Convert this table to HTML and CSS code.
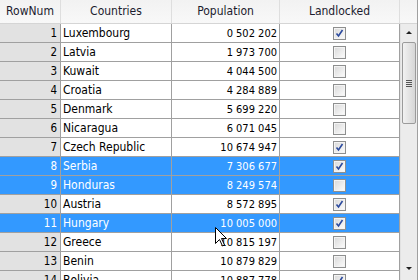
FILE: index.html
```html
<!DOCTYPE html>
<html>
<head>
<meta charset="utf-8">
<link rel="stylesheet" href="styles.css">
</head>
<body>
<div class="grid">
  <div class="head">
    <div class="hc c1">RowNum</div>
    <div class="hc c2">Countries</div>
    <div class="hc c3">Population</div>
    <div class="hc c4">Landlocked</div>
    <div class="hc c5"></div>
  </div>
  <div class="main">
    <div class="rows">
      <div class="row"><div class="num">1</div><div class="name">Luxembourg</div><div class="pop">0 502 202</div><div class="chk"><span class="box"><svg class="tick" width="11" height="11" viewBox="0 0 11 11"><path d="M2.5 5.5 L4.5 8 L8.5 2" fill="none" stroke="#2b4a9e" stroke-width="1.6"/></svg></span></div></div>
      <div class="row"><div class="num">2</div><div class="name">Latvia</div><div class="pop">1 973 700</div><div class="chk"><span class="box"></span></div></div>
      <div class="row"><div class="num">3</div><div class="name">Kuwait</div><div class="pop">4 044 500</div><div class="chk"><span class="box"></span></div></div>
      <div class="row"><div class="num">4</div><div class="name">Croatia</div><div class="pop">4 284 889</div><div class="chk"><span class="box"></span></div></div>
      <div class="row"><div class="num">5</div><div class="name">Denmark</div><div class="pop">5 699 220</div><div class="chk"><span class="box"></span></div></div>
      <div class="row"><div class="num">6</div><div class="name">Nicaragua</div><div class="pop">6 071 045</div><div class="chk"><span class="box"></span></div></div>
      <div class="row"><div class="num">7</div><div class="name">Czech Republic</div><div class="pop">10 674 947</div><div class="chk"><span class="box"><svg class="tick" width="11" height="11" viewBox="0 0 11 11"><path d="M2.5 5.5 L4.5 8 L8.5 2" fill="none" stroke="#2b4a9e" stroke-width="1.6"/></svg></span></div></div>
      <div class="row sel"><div class="num">8</div><div class="name">Serbia</div><div class="pop">7 306 677</div><div class="chk"><span class="box"><svg class="tick" width="11" height="11" viewBox="0 0 11 11"><path d="M2.5 5.5 L4.5 8 L8.5 2" fill="none" stroke="#2b4a9e" stroke-width="1.6"/></svg></span></div></div>
      <div class="row sel"><div class="num">9</div><div class="name">Honduras</div><div class="pop">8 249 574</div><div class="chk"><span class="box"></span></div></div>
      <div class="row"><div class="num">10</div><div class="name">Austria</div><div class="pop">8 572 895</div><div class="chk"><span class="box"><svg class="tick" width="11" height="11" viewBox="0 0 11 11"><path d="M2.5 5.5 L4.5 8 L8.5 2" fill="none" stroke="#2b4a9e" stroke-width="1.6"/></svg></span></div></div>
      <div class="row sel"><div class="num">11</div><div class="name">Hungary</div><div class="pop">10 005 000</div><div class="chk"><span class="box"><svg class="tick" width="11" height="11" viewBox="0 0 11 11"><path d="M2.5 5.5 L4.5 8 L8.5 2" fill="none" stroke="#2b4a9e" stroke-width="1.6"/></svg></span></div></div>
      <div class="row"><div class="num">12</div><div class="name">Greece</div><div class="pop">10 815 197</div><div class="chk"><span class="box"></span></div></div>
      <div class="row"><div class="num">13</div><div class="name">Benin</div><div class="pop">10 879 829</div><div class="chk"><span class="box"></span></div></div>
      <div class="row"><div class="num">14</div><div class="name">Bolivia</div><div class="pop">10 887 778</div><div class="chk"><span class="box"><svg class="tick" width="11" height="11" viewBox="0 0 11 11"><path d="M2.5 5.5 L4.5 8 L8.5 2" fill="none" stroke="#2b4a9e" stroke-width="1.6"/></svg></span></div></div>
    </div>
    <div class="vscroll">
      <div class="arrow up"></div>
      <div class="track">
        <div class="thumb"><span class="grip"></span></div>
      </div>
      <div class="arrow down"></div>
    </div>
  </div>
  <svg class="cursor" width="13" height="20" viewBox="0 0 13 20">
    <path d="M0.5 0.5 L0.5 16.5 L4.5 12.5 L7.5 19 L9.5 18 L6.5 11.5 L11.5 11.5 Z" fill="#fff" stroke="#000" stroke-width="1"/>
  </svg>
</div>
</body>
</html>
```
FILE: styles.css
```css
html, body {
  margin: 0;
  padding: 0;
  background: #fff;
}
body {
  font-family: "DejaVu Sans Condensed", "DejaVu Sans", Verdana, sans-serif;
  font-stretch: condensed;
  font-size: 12px;
  color: #000;
  width: 418px;
  height: 280px;
  overflow: hidden;
}
.grid {
  position: relative;
  width: 418px;
  height: 280px;
  overflow: hidden;
  box-sizing: border-box;
  border-right: 1px solid #a0a0a0;
}
.head {
  display: flex;
  height: 24px;
  box-sizing: border-box;
  border-bottom: 1px solid #d5d5d5;
  background: linear-gradient(#f2f2f2, #f8f8f8);
}
.hc {
  display: flex;
  align-items: center;
  justify-content: center;
  border-right: 1px solid #dedede;
  box-sizing: border-box;
  color: #1b1b2e;
  padding-bottom: 1px;
}
.c1 { width: 61px; }
.c2 { width: 111px; }
.c3 { width: 108px; }
.c4 { width: 120px; }
.c5 { width: 17px; border-right: none; }
.main {
  display: flex;
  height: 256px;
}
.rows {
  width: 400px;
  display: flex;
  flex-direction: column;
}
.row {
  display: flex;
  flex: none;
  height: 19px;
  box-sizing: border-box;
  border-bottom: 1px solid #a0a0a0;
}
.row > div {
  box-sizing: border-box;
  border-right: 1px solid #a0a0a0;
  display: flex;
  align-items: center;
  white-space: nowrap;
  overflow: hidden;
}
.num {
  width: 61px;
  justify-content: flex-end;
  padding-right: 3px;
  background: #e2e2e2;
  font-size: 11.5px;
}
.name {
  width: 111px;
  padding-left: 2px;
}
.pop {
  width: 108px;
  justify-content: flex-end;
  padding-right: 2px;
  font-size: 11px;
}
.chk {
  width: 120px;
  justify-content: center;
}
.row.sel {
  background: #3399ff;
  color: #fff;
}
.row.sel .num {
  background: #3399ff;
}
.box {
  width: 13px;
  height: 13px;
  box-sizing: border-box;
  border: 1px solid #8e8f8f;
  background: linear-gradient(135deg, #d8d8d8, #fdfdfd);
  box-shadow: inset 0 0 0 1px #f4f4f4;
  margin-left: -1px;
  display: flex;
}
.tick {
  display: block;
}
.vscroll {
  width: 17px;
  display: flex;
  flex-direction: column;
  background: #ececec;
  border-left: 1px solid #e2e2e2;
}
.arrow {
  height: 17px;
  display: flex;
  align-items: center;
  justify-content: center;
}
.arrow::before {
  content: "";
  width: 0;
  height: 0;
  border-left: 3px solid transparent;
  border-right: 3px solid transparent;
}
.arrow.up::before {
  border-bottom: 3px solid #202020;
}
.arrow.down {
  margin-bottom: 3px;
}
.arrow.down::before {
  border-top: 3px solid #202020;
}
.track {
  flex: 1;
  padding: 1px 0 0 1px;
}
.thumb {
  width: 14px;
  height: 82px;
  box-sizing: border-box;
  border: 1px solid #9b9b9b;
  border-radius: 2px;
  background: linear-gradient(90deg, #f2f2f2, #e4e4e4 50%, #d6d6d6);
  display: flex;
  align-items: center;
  justify-content: center;
}
.grip {
  width: 6px;
  height: 7px;
  background: repeating-linear-gradient(#555 0 1px, transparent 1px 2px);
}
.cursor {
  position: absolute;
  left: 215px;
  top: 227px;
}
```
